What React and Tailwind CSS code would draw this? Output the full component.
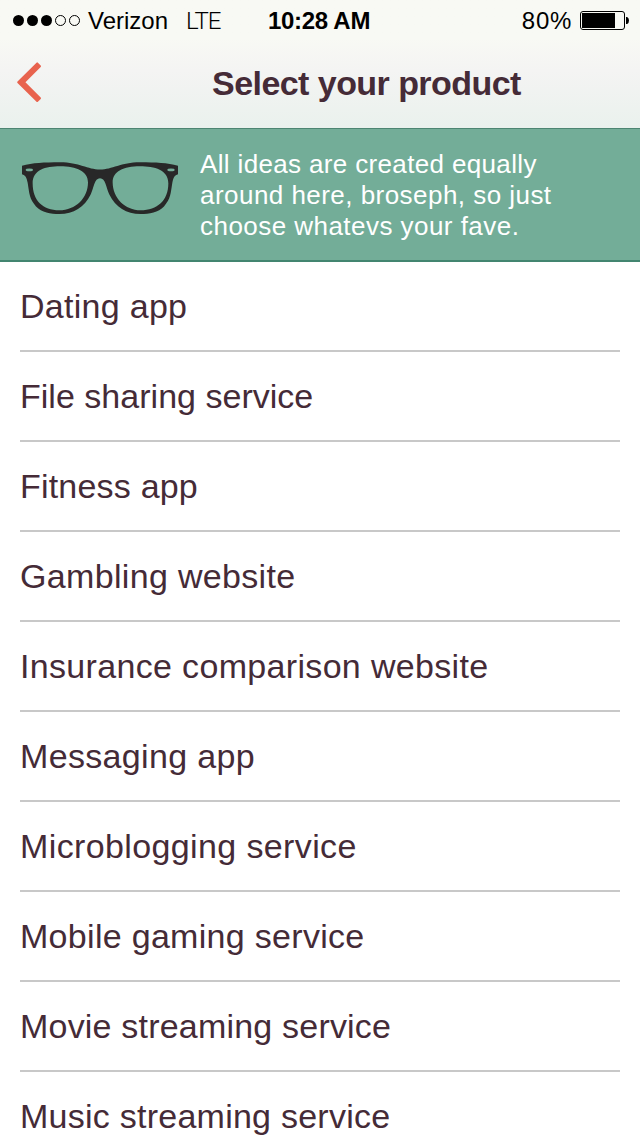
const products = [
  { name: 'Dating app', tracking: 'tracking-[0.28px]' },
  { name: 'File sharing service', tracking: 'tracking-[0.02px]' },
  { name: 'Fitness app', tracking: 'tracking-[0.2px]' },
  { name: 'Gambling website', tracking: 'tracking-[0.33px]' },
  { name: 'Insurance comparison website', tracking: 'tracking-[0.33px]' },
  { name: 'Messaging app', tracking: 'tracking-[0.33px]' },
  { name: 'Microblogging service', tracking: 'tracking-[0.38px]' },
  { name: 'Mobile gaming service', tracking: 'tracking-[0.3px]' },
  { name: 'Movie streaming service', tracking: 'tracking-[0.2px]' },
  { name: 'Music streaming service', tracking: 'tracking-[0.25px]' },
];

function SignalDots() {
  return (
    <svg width="68" height="12" viewBox="0 0 68 12" className="shrink-0">
      <circle cx="5.5" cy="5.5" r="5.5" />
      <circle cx="19.5" cy="5.5" r="5.5" />
      <circle cx="33.5" cy="5.5" r="5.5" />
      <circle cx="47.5" cy="5.5" r="5" fill="none" stroke="#000" />
      <circle cx="61.5" cy="5.5" r="5" fill="none" stroke="#000" />
    </svg>
  );
}

function Battery() {
  return (
    <svg width="49" height="19" viewBox="0 0 49 19" className="mb-0.5 shrink-0">
      <rect x="0.5" y="0.5" width="44" height="18" rx="2.5" fill="none" stroke="#000" />
      <rect x="2" y="2" width="33" height="15" />
      <path d="M46 6h1.2q1.8 1.2 1.8 3.5t-1.8 3.5H46z" />
    </svg>
  );
}

function BackChevron() {
  return (
    <svg
      width="26"
      height="42"
      viewBox="0 0 26 42"
      fill="#e8634e"
      stroke="#e8634e"
      strokeWidth="2"
      strokeLinejoin="round"
      className="mb-1"
    >
      <path d="M2.2 21.2L21.2 2.4L24 5.3L8 21.2L24 37.2L21.2 40Z" />
    </svg>
  );
}

function Glasses() {
  return (
    <svg width="156" height="52" viewBox="66 125 468 157" preserveAspectRatio="none" fill="#282828" fillRule="evenodd">
      <path
        d="M66 136C98 128 132 126 180 126C238 126 263 148 300 148C337 148 362 126 420 126C468 126 502 128 534 136V162C524 165 520 171 517 188C512 220 512 237 492 259C475 277 448 282 422 282C379 282 347 262 328 223C318 202 317 174 300 174C283 174 282 202 272 223C253 262 221 282 178 282C152 282 125 277 108 259C88 237 88 220 83 188C80 171 76 165 66 162Z
        M180 138C136 138 98 149 98 190C98 241 128 271 178 271C227 271 264 233 264 187C264 153 230 138 180 138Z
        M420 138C370 138 338 153 338 187C338 233 375 271 422 271C472 271 505 241 505 190C505 149 464 138 420 138Z"
      />
      <ellipse cx="88" cy="149" rx="11" ry="4" fill="#73ad98" />
      <ellipse cx="513" cy="149" rx="11" ry="4" fill="#73ad98" />
    </svg>
  );
}

function StatusBar() {
  return (
    <div className="flex h-10 items-center pt-0.5 pl-[13px] pr-[11px] text-2xl leading-10 text-black whitespace-nowrap">
      <SignalDots />
      <span className="ml-[7px] w-[98px]">Verizon</span>
      <span className="w-[82px] font-['Roboto','Liberation_Sans',sans-serif] font-light tracking-[-1px]">LTE</span>
      <span className="font-bold tracking-[-0.3px]">10:28 AM</span>
      <div className="ml-auto flex items-center gap-2">
        <span className="tracking-[0.7px]">80%</span>
        <Battery />
      </div>
    </div>
  );
}

export default function App() {
  return (
    <div className="h-[1136px] w-[640px] overflow-hidden bg-white font-['Liberation_Sans',Arial,sans-serif] text-[#452b37]">
      <header className="h-[129px] border-b border-[#4d8572] bg-linear-to-b from-[#f8f9f4] from-30% via-[#f4f4f3] via-55% to-[#eaf1ed]">
        <StatusBar />
        <div className="flex h-[88px] items-center pl-4">
          <BackChevron />
          <h1 className="mb-0.5 ml-[170px] text-[34px] leading-10 font-bold tracking-[-0.55px] whitespace-nowrap">
            Select your product
          </h1>
        </div>
      </header>

      <section className="flex h-[133px] border-b-2 border-[#438570] bg-[#73ad98] pt-5 pl-[22px]">
        <div className="w-[178px] pt-[13px]">
          <Glasses />
        </div>
        <p className="text-[26px] leading-[31px] tracking-[0.46px] whitespace-nowrap text-white">
          <span className="tracking-[0.35px]">All ideas are created equally</span>
          <br />
          around here, broseph, so just
          <br />
          choose whatevs your fave.
        </p>
      </section>

      <ul className="px-5">
        {products.map((product) => (
          <li
            key={product.name}
            className={`flex h-[90px] items-center border-b-2 border-[#c8c8c8] text-[34px] leading-10 ${product.tracking}`}
          >
            {product.name}
          </li>
        ))}
      </ul>
    </div>
  );
}
